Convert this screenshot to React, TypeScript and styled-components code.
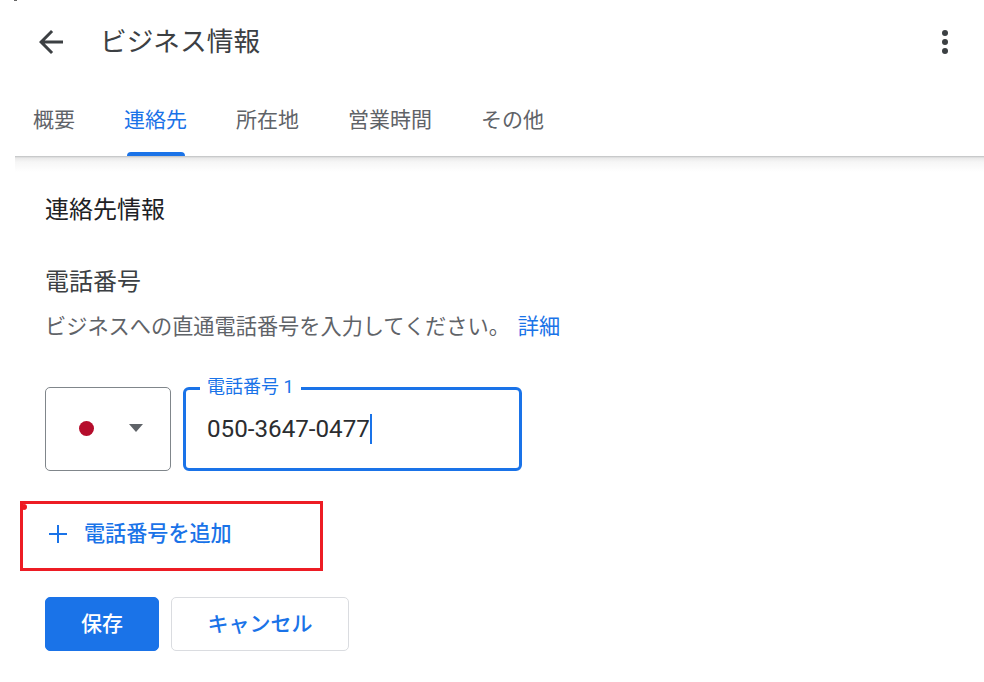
import { createGlobalStyle } from "styled-components";
import styled from "styled-components";

const GlobalStyle = createGlobalStyle`
  html, body {
    margin: 0;
    background: #fff;
  }
  body {
    font-family: Roboto, "Noto Sans CJK JP", sans-serif;
    color: #3c4043;
  }
`;

const Page = styled.div`
  position: relative;
  width: 984px;
  height: 682px;
  padding-left: 15px;
  box-sizing: border-box;
  overflow: hidden;

  /* leftover speck at the top edge of the capture */
  &::before {
    content: "";
    position: absolute;
    top: 0;
    left: 14px;
    width: 3px;
    height: 1px;
    background: #666;
  }
`;

const Header = styled.header`
  position: relative;
  height: 156px;
  display: flex;
  flex-direction: column;

  &::after {
    content: "";
    position: absolute;
    top: 100%;
    left: 0;
    right: 0;
    height: 16px;
    background: linear-gradient(#bdbfc0, #e9e9e9 2px, #f6f6f6 6px, #fff);
  }
`;

const TitleBar = styled.div`
  height: 84px;
  display: flex;
  align-items: center;
  padding: 0 25px 0 18px;
`;

const IconButton = styled.button`
  border: 0;
  background: none;
  padding: 0;
  display: flex;
  align-items: center;
  justify-content: center;
  color: #3c4043;
`;

const Title = styled.h1`
  flex: 1;
  margin: 0 0 0 31px;
  font-size: 26.7px;
  line-height: 36px;
  font-weight: 400;
  color: #3c4043;
`;

const Tabs = styled.nav`
  flex: 1;
  display: flex;
  gap: 49px;
  padding-left: 18px;
`;

const Tab = styled.div<{ $active?: boolean }>`
  position: relative;
  padding-top: 21px;
  font-size: 21px;
  line-height: 30px;
  color: ${(p) => (p.$active ? "#1a73e8" : "#5f6368")};

  &::after {
    content: "";
    display: ${(p) => (p.$active ? "block" : "none")};
    position: absolute;
    left: 3px;
    right: 2px;
    bottom: 0;
    height: 4px;
    background: #1a73e8;
    border-radius: 4px 4px 0 0;
  }
`;

const Content = styled.main`
  padding: 36px 0 0 30px;
`;

const SectionTitle = styled.h2`
  margin: 0;
  font-size: 24px;
  line-height: 36px;
  font-weight: 400;
  color: #202124;
`;

const FieldTitle = styled.h3`
  margin: 36px 0 0;
  font-size: 24px;
  line-height: 36px;
  font-weight: 400;
  color: #3c4043;
`;

const Help = styled.p`
  margin: 12px 0 0;
  font-size: 21.2px;
  line-height: 30px;
  color: #5f6368;
`;

const HelpLink = styled.a`
  color: #1a73e8;
  margin-left: 8px;
`;

const PhoneRow = styled.div`
  display: flex;
  gap: 12px;
  margin-top: 45px;
`;

const CountrySelect = styled.div`
  width: 126px;
  height: 84px;
  box-sizing: border-box;
  border: 1px solid #80868b;
  border-radius: 5px;
  display: flex;
  align-items: center;
  padding: 0 27px 2px 33px;
  justify-content: space-between;
`;

const Flag = styled.span`
  width: 15px;
  height: 15px;
  border-radius: 50%;
  background: #b50d2c;
`;

const Caret = styled.span`
  width: 0;
  height: 0;
  border-left: 7px solid transparent;
  border-right: 7px solid transparent;
  border-top: 8px solid #5f6368;
`;

const PhoneField = styled.div`
  position: relative;
  width: 339px;
  height: 84px;
  box-sizing: border-box;
  border: 3px solid #1a73e8;
  border-radius: 6px;
  display: flex;
  align-items: center;
  padding-left: 21px;
`;

const FieldLabel = styled.span`
  position: absolute;
  top: -14px;
  left: 14px;
  padding: 0 7px;
  background: #fff;
  font-size: 18px;
  line-height: 22px;
  color: #1a73e8;
`;

const PhoneValue = styled.span`
  font-size: 24.2px;
  line-height: 30px;
  color: #2b2d30;
  border-right: 2px solid #1a73e8;
`;

const AddButton = styled.button`
  position: relative;
  display: flex;
  align-items: center;
  gap: 15px;
  width: 303px;
  height: 70px;
  box-sizing: border-box;
  margin: 30px 0 0 -25px;
  padding: 0 0 4px 24px;
  border: 3px solid #ed1c24;
  background: #fff;
  font: inherit;
  font-size: 21.1px;
  font-weight: 500;
  line-height: 30px;
  color: #1a73e8;

  &::before {
    content: "";
    position: absolute;
    top: 0;
    left: -2px;
    width: 6px;
    height: 6px;
    border-radius: 50%;
    background: #ed1c24;
  }
`;

const Actions = styled.div`
  display: flex;
  gap: 12px;
  margin-top: 26px;
`;

const ActionButton = styled.button<{ $primary?: boolean }>`
  height: 54px;
  width: ${(p) => (p.$primary ? "114px" : "178px")};
  box-sizing: border-box;
  padding: 0 0 4px;
  border-radius: 5px;
  border: 1px solid ${(p) => (p.$primary ? "#1a73e8" : "#dadce0")};
  background: ${(p) => (p.$primary ? "#1a73e8" : "#fff")};
  color: ${(p) => (p.$primary ? "#fff" : "#1a73e8")};
  font: inherit;
  font-size: 21px;
  font-weight: 500;
`;

export default function App() {
  return (
    <Page>
      <GlobalStyle />
      <Header>
        <TitleBar>
          <IconButton aria-label="戻る">
            <svg width="36" height="36" viewBox="0 0 24 24" fill="currentColor">
              <path d="M20 11H7.83l5.59-5.59L12 4l-8 8 8 8 1.41-1.41L7.83 13H20v-2z" />
            </svg>
          </IconButton>
          <Title>ビジネス情報</Title>
          <IconButton aria-label="メニュー">
            <svg width="28" height="28" viewBox="0 0 28 28" fill="currentColor">
              <circle cx="14" cy="5" r="3" />
              <circle cx="14" cy="14" r="3" />
              <circle cx="14" cy="23" r="3" />
            </svg>
          </IconButton>
        </TitleBar>
        <Tabs>
          <Tab>概要</Tab>
          <Tab $active>連絡先</Tab>
          <Tab>所在地</Tab>
          <Tab>営業時間</Tab>
          <Tab>その他</Tab>
        </Tabs>
      </Header>
      <Content>
        <SectionTitle>連絡先情報</SectionTitle>
        <FieldTitle>電話番号</FieldTitle>
        <Help>
          ビジネスへの直通電話番号を入力してください。
          <HelpLink>詳細</HelpLink>
        </Help>
        <PhoneRow>
          <CountrySelect>
            <Flag />
            <Caret />
          </CountrySelect>
          <PhoneField>
            <FieldLabel>電話番号 1</FieldLabel>
            <PhoneValue>050-3647-0477</PhoneValue>
          </PhoneField>
        </PhoneRow>
        <AddButton>
          <svg width="22" height="22" viewBox="0 0 22 22" fill="none" stroke="currentColor" strokeWidth="2">
            <path d="M11 2v18M2 11h18" />
          </svg>
          電話番号を追加
        </AddButton>
        <Actions>
          <ActionButton $primary>保存</ActionButton>
          <ActionButton>キャンセル</ActionButton>
        </Actions>
      </Content>
    </Page>
  );
}
